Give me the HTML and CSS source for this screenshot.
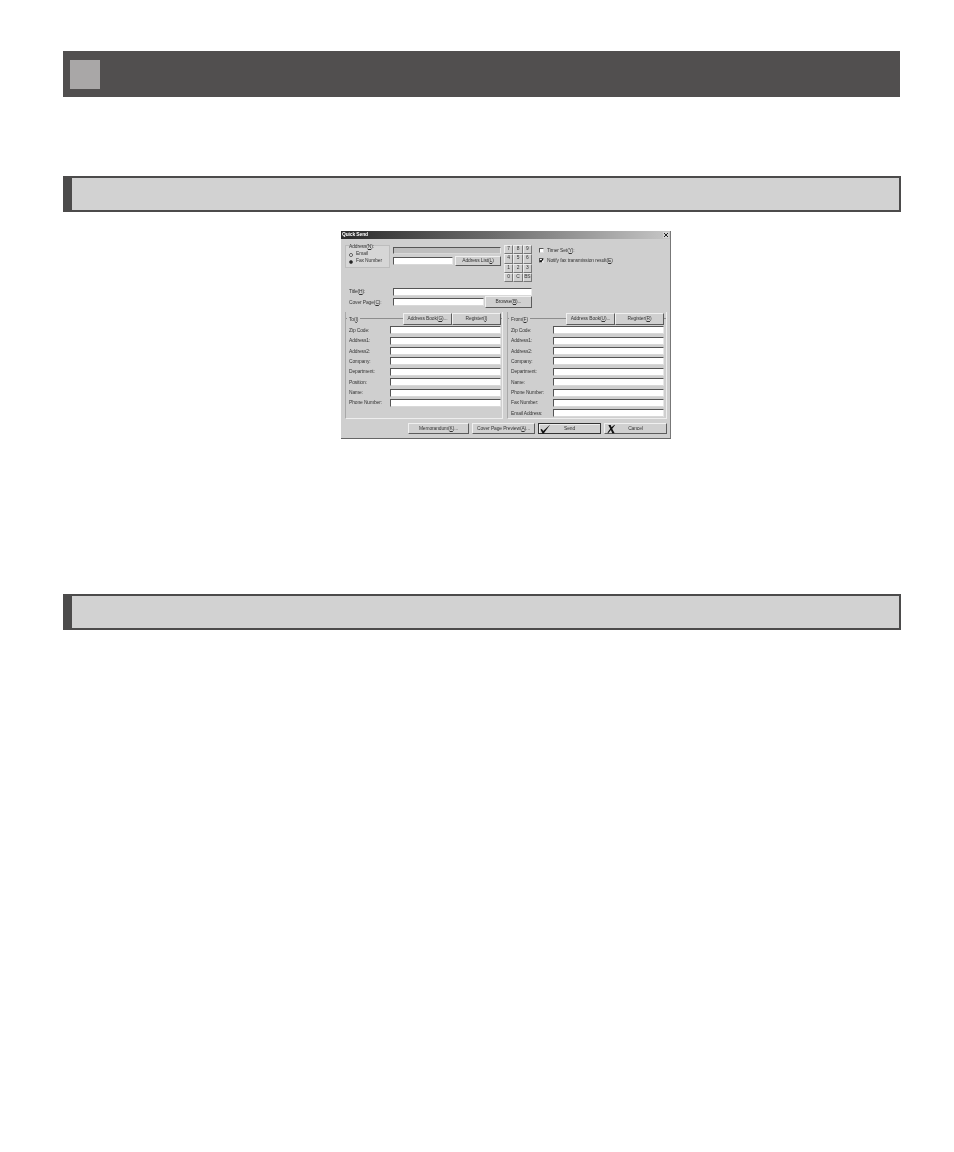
FILE: index.html
```html
<!DOCTYPE html>
<html lang="en">
<head>
<meta charset="utf-8">
<title>Quick Send</title>
<link rel="stylesheet" href="styles.css">
</head>
<body>
<main class="page">
  <header class="chapter"><div class="chapter-mark"></div></header>
  <section class="heading first"></section>
  <div class="dialog">
    <div class="titlebar"><span class="title-text">Quick Send</span><span class="close"><svg viewBox="0 0 6 6" class="close-x"><path d="M1 1l4 4M5 1L1 5"/></svg></span></div>
    <div class="top">
      <div class="top-left">
        <div class="upper">
          <div class="address-box">
            <div class="address-label">Address(<u>N</u>):</div>
            <div class="radio-row"><span class="radio"></span>Email</div>
            <div class="radio-row"><span class="radio on"></span>Fax Number</div>
          </div>
          <div class="dest">
            <div class="input gray"></div>
            <div class="dest-row">
              <div class="input w60"></div>
              <div class="btn w46">Address List(<u>L</u>)</div>
            </div>
          </div>
          <div class="keypad">
            <span>7</span><span>8</span><span>9</span>
            <span>4</span><span>5</span><span>6</span>
            <span>1</span><span>2</span><span>3</span>
            <span>0</span><span>C</span><span>BS</span>
          </div>
        </div>
        <div class="title-row"><span class="lbl">Title(<u>H</u>):</span><div class="input grow"></div></div>
        <div class="cover-row"><span class="lbl">Cover Page(<u>C</u>):</span><div class="input w91"></div><div class="btn w47">Browse(<u>B</u>)...</div></div>
      </div>
      <div class="checks">
        <div class="check-row"><span class="check"></span>Timer Set(<u>Y</u>):</div>
        <div class="check-row"><span class="check"><svg viewBox="0 0 6 6" class="tick"><path d="M0 3l2 2.4L6 0"/></svg></span>Notify fax transmission result(<u>E</u>)</div>
      </div>
    </div>
    <div class="groups">
      <div class="group to">
        <div class="group-head">
          <span class="legend">To(<u>I</u>)</span>
          <div class="btn w49">Address Book(<u>G</u>)...</div>
          <div class="btn w49">Register(<u>I</u>)</div>
        </div>
        <div class="row"><span>Zip Code:</span><div class="input"></div></div>
        <div class="row"><span>Address1:</span><div class="input"></div></div>
        <div class="row"><span>Address2:</span><div class="input"></div></div>
        <div class="row"><span>Company:</span><div class="input"></div></div>
        <div class="row"><span>Department:</span><div class="input"></div></div>
        <div class="row"><span>Position:</span><div class="input"></div></div>
        <div class="row"><span>Name:</span><div class="input"></div></div>
        <div class="row"><span>Phone Number:</span><div class="input"></div></div>
      </div>
      <div class="group from">
        <div class="group-head">
          <span class="legend">From(<u>F</u>)</span>
          <div class="btn w49">Address Book(<u>U</u>)...</div>
          <div class="btn w49">Register(<u>R</u>)</div>
        </div>
        <div class="row"><span>Zip Code:</span><div class="input"></div></div>
        <div class="row"><span>Address1:</span><div class="input"></div></div>
        <div class="row"><span>Address2:</span><div class="input"></div></div>
        <div class="row"><span>Company:</span><div class="input"></div></div>
        <div class="row"><span>Department:</span><div class="input"></div></div>
        <div class="row"><span>Name:</span><div class="input"></div></div>
        <div class="row"><span>Phone Number:</span><div class="input"></div></div>
        <div class="row"><span>Fax Number:</span><div class="input"></div></div>
        <div class="row"><span>Email Address:</span><div class="input"></div></div>
      </div>
    </div>
    <div class="actions">
      <div class="btn w61">Memorandum(<u>K</u>)...</div>
      <div class="btn w63">Cover Page Preview(<u>A</u>)...</div>
      <div class="btn w63 default">
        <svg viewBox="0 0 12 10" class="act-icon"><path d="M.5 5.5L2 5l1.5 2.2L11.2 0 4 10H2.8z"/></svg>Send
      </div>
      <div class="btn w63">
        <svg viewBox="0 0 10 10" class="act-icon x"><path d="M1.5.5h2.6L5 3 8.4.2 8.8.8 5.8 4.6 8.5 9.8H5.8L4.4 6.2 1.2 9.6.6 9l3-4.2z"/></svg>Cancel
      </div>
    </div>
  </div>
  <section class="heading second"></section>
</main>
</body>
</html>
```
FILE: styles.css
```css
* { box-sizing: border-box; }
html, body { margin: 0; background: #fff; }
body { min-height: 1152px; font-family: "Liberation Sans", Arial, sans-serif; }
.page { padding: 51px 0 0 63px; width: 954px; }

.chapter { width: 837px; height: 46px; background: #514f4f; padding: 9px 0 0 7px; }
.chapter-mark { width: 30px; height: 29px; background: #a9a7a7; }
.heading { width: 838px; height: 36px; background: #d2d2d2; border: 2px solid #4c4b4b; border-left-width: 9px; }
.heading.first { margin-top: 79px; }
.heading.second { margin-top: 155px; }

.dialog {
  width: 330px; height: 208px; margin: 19px 0 0 278px;
  background: #cfcfcf; color: #333; font-size: 4.9px; line-height: 1;
  border-right: 1px solid #777; border-bottom: 1px solid #666;
  filter: blur(.35px); letter-spacing: -.02em;
}
.titlebar {
  height: 8px; display: flex; align-items: center; justify-content: space-between; padding: 0 1px;
  background: linear-gradient(90deg, #2b2b2b 0%, #6a6a6a 45%, #c6c6c6 100%);
  color: #fff; font-weight: bold;
}
.close { width: 6px; height: 6px; background: #d4d4d4; }
.close-x { display: block; width: 6px; height: 6px; fill: none; stroke: #222; stroke-width: 1; }

.top { display: flex; padding: 6px 0 0 4px; }
.top-left { width: 187px; }
.upper { display: flex; height: 37px; }
.address-box { width: 45px; height: 23px; background: #d6d6d6; border: 1px solid #bdbdbd; padding: 0 0 0 3px; }
.address-label { margin-top: -1px; height: 6px; }
.radio-row { display: flex; align-items: center; height: 7px; }
.radio { width: 4px; height: 4px; border-radius: 50%; background: #fff; border: 1px solid #555; margin-right: 3px; }
.radio.on { background: #111; }
.dest { width: 108px; margin: 2px 3px 0; }
.gray { background: #bebebe !important; height: 7px !important; }
.dest-row { display: flex; align-items: center; justify-content: space-between; margin-top: 2px; }
.keypad { width: 28px; height: 37px; display: grid; grid-template-columns: repeat(3, 1fr); grid-template-rows: repeat(4, 1fr); }
.keypad span { display: flex; align-items: center; justify-content: center; background: #d0d0d0; border: 1px solid; border-color: #eee #777 #777 #eee; }

.input { height: 8px; background: #fff; border: 1px solid; border-color: #555 #e8e8e8 #d8d8d8 #555; }
.w60 { width: 60px; }
.w91 { width: 91px; }
.grow { flex: 1; }
.btn {
  display: flex; align-items: center; justify-content: center; height: 10px;
  background: #d0d0d0; border: 1px solid; border-color: #f0f0f0 #5c5c5c #5c5c5c #f0f0f0; white-space: nowrap;
}
.w46 { width: 46px; }
.w47 { width: 47px; height: 12px; margin-left: 1px; padding-top: 1px; }
.w49 { width: 49px; height: 12px; }
.w61 { width: 61px; height: 11px; padding-top: 1px; }
.w63 { width: 63px; height: 11px; padding-top: 1px; position: relative; }

.title-row { display: flex; align-items: center; height: 9px; margin-top: 5px; }
.cover-row { display: flex; align-items: center; height: 12px; }
.lbl { width: 48px; padding-left: 4px; margin-top: 2px; flex: none; }

.checks { padding: 4px 0 0 7px; }
.check-row { display: flex; align-items: center; height: 4px; margin-bottom: 6px; white-space: nowrap; }
.check { width: 5px; height: 5px; margin-top: -2px; background: #fff; border: 1px solid; border-color: #555 #ddd #ddd #555; margin-right: 3px; }
.tick { display: block; width: 3px; height: 3px; fill: none; stroke: #000; stroke-width: 2.4; overflow: visible; }

.groups { display: flex; gap: 4px; margin: 4px 0 0 4px; }
.group { height: 107px; border-left: 1px solid #a8a8a8; border-right: 1px solid #eee; border-bottom: 1px solid #eee; }
.group.to { width: 158px; }
.group.from { width: 160px; }
.group-head {
  display: flex; align-items: center; height: 14px; margin-bottom: -1px;
  background: linear-gradient(#cfcfcf 6px, #8d8d8d 6px, #8d8d8d 7px, #cfcfcf 7px);
  padding-right: 1px;
}
.from .group-head { padding-right: 2px; }
.legend { background: #cfcfcf; padding: 0 2px; margin: 2px auto 0 1px; }
.row { display: flex; align-items: center; height: 10.4px; padding: 0 1px 0 3px; }
.from .row { padding-right: 2px; }
.row span { width: 41px; flex: none; white-space: nowrap; margin-top: 2px; }
.from .row span { width: 42px; }
.row .input { flex: 1; }

.actions { display: flex; justify-content: flex-end; gap: 3px; padding-right: 3px; margin-top: 4px; }
.default { border: 1px solid #333; box-shadow: inset 1px 1px 0 #eee; }
.act-icon { position: absolute; left: 1px; top: 0; width: 11px; height: 10px; fill: #111; }
.act-icon.x { width: 9px; left: 2px; }
```
